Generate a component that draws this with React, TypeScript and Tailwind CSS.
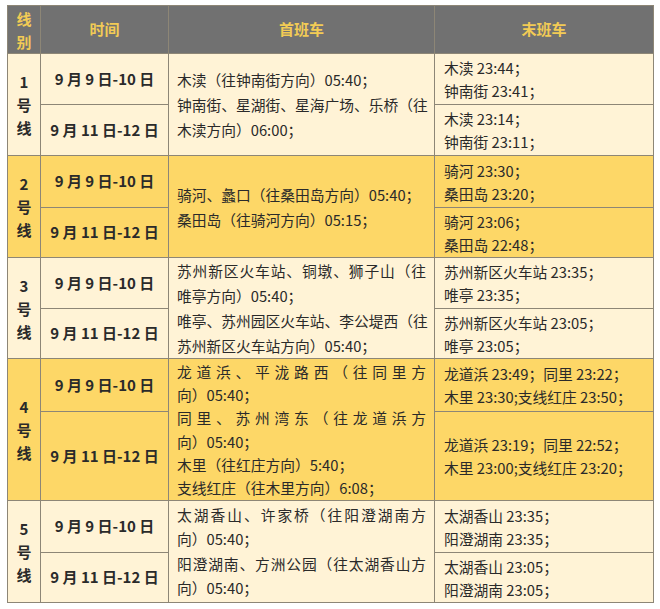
type Line = { t: string; j?: boolean };

type Route = {
  no: string;
  yellow: boolean;
  heights: [number, number];
  firstLh: number;
  first: Line[];
  last: [string[], string[]];
};

const routes: Route[] = [
  {
    no: '1',
    yellow: false,
    heights: [51, 51],
    firstLh: 25,
    first: [
      { t: '木渎（往钟南街方向）05:40；' },
      { t: '钟南街、星湖街、星海广场、乐桥（往', j: true },
      { t: '木渎方向）06:00；' },
    ],
    last: [
      ['木渎 23:44；', '钟南街 23:41；'],
      ['木渎 23:14；', '钟南街 23:11；'],
    ],
  },
  {
    no: '2',
    yellow: true,
    heights: [52, 50],
    firstLh: 25,
    first: [{ t: '骑河、蠡口（往桑田岛方向）05:40；' }, { t: '桑田岛（往骑河方向）05:15；' }],
    last: [
      ['骑河 23:30；', '桑田岛 23:20；'],
      ['骑河 23:06；', '桑田岛 22:48；'],
    ],
  },
  {
    no: '3',
    yellow: false,
    heights: [51, 50],
    firstLh: 25,
    first: [
      { t: '苏州新区火车站、铜墩、狮子山（往', j: true },
      { t: '唯亭方向）05:40；' },
      { t: '唯亭、苏州园区火车站、李公堤西（往', j: true },
      { t: '苏州新区火车站方向）05:40；' },
    ],
    last: [
      ['苏州新区火车站 23:35；', '唯亭 23:35；'],
      ['苏州新区火车站 23:05；', '唯亭 23:05；'],
    ],
  },
  {
    no: '4',
    yellow: true,
    heights: [53, 89],
    firstLh: 23.3,
    first: [
      { t: '龙道浜、平泷路西（往同里方', j: true },
      { t: '向）05:40；' },
      { t: '同里、苏州湾东（往龙道浜方', j: true },
      { t: '向）05:40；' },
      { t: '木里（往红庄方向）5:40；' },
      { t: '支线红庄（往木里方向）6:08；' },
    ],
    last: [
      ['龙道浜 23:49；同里 23:22；', '木里 23:30;支线红庄 23:50；'],
      ['龙道浜 23:19；同里 22:52；', '木里 23:00;支线红庄 23:20；'],
    ],
  },
  {
    no: '5',
    yellow: false,
    heights: [52, 50],
    firstLh: 24.5,
    first: [
      { t: '太湖香山、许家桥（往阳澄湖南方', j: true },
      { t: '向）05:40；' },
      { t: '阳澄湖南、方洲公园（往太湖香山方', j: true },
      { t: '向）05:40；' },
    ],
    last: [
      ['太湖香山 23:35；', '阳澄湖南 23:35；'],
      ['太湖香山 23:05；', '阳澄湖南 23:05；'],
    ],
  },
];

const cell = 'border border-[#8d8676] align-middle';

export default function App() {
  return (
    <div
      className="min-h-[609px] bg-white pl-[7px] pt-[5px] text-[#2a2a2a]"
      style={{ fontFamily: '"Noto Sans CJK SC", "Noto Sans", sans-serif' }}
    >
      <table className="w-[646px] table-fixed border-collapse text-[14.75px]">
        <colgroup>
          <col className="w-[33px]" />
          <col className="w-[128px]" />
          <col className="w-[266px]" />
          <col className="w-[219px]" />
        </colgroup>
        <thead>
          <tr className="h-[48px] bg-[#717171] text-[15px] font-bold text-[#f2cb55]">
            <th className={`${cell} leading-[23px]`}>
              线
              <br />
              别
            </th>
            <th className={cell}>时间</th>
            <th className={cell}>首班车</th>
            <th className={cell}>末班车</th>
          </tr>
        </thead>
        <tbody>
          {routes.map((r) => {
            const bg = r.yellow ? 'bg-[#fdd767]' : 'bg-[#fff3d6]';
            return [0, 1].map((i) => (
              <tr key={r.no + i} className={bg} style={{ height: r.heights[i] }}>
                {i === 0 && (
                  <td rowSpan={2} className={`${cell} text-center text-[15px] font-bold leading-[23px]`}>
                    {r.no}
                    <br />
                    号
                    <br />
                    线
                  </td>
                )}
                <td className={`${cell} text-center text-[15px] font-bold whitespace-nowrap`}>
                  {i === 0 ? '9 月 9 日-10 日' : '9 月 11 日-12 日'}
                </td>
                {i === 0 && (
                  <td rowSpan={2} className={`${cell} px-[8px]`}>
                    {r.first.map((l, k) => (
                      <div
                        key={k}
                        className={`whitespace-nowrap ${l.j ? '[text-align-last:justify] text-justify' : ''}`}
                        style={{ lineHeight: `${r.firstLh}px` }}
                      >
                        {l.t}
                      </div>
                    ))}
                  </td>
                )}
                <td className={`${cell} px-[9px]`}>
                  {r.last[i].map((t, k) => (
                    <div key={k} className="whitespace-nowrap leading-[23px]">
                      {t}
                    </div>
                  ))}
                </td>
              </tr>
            ));
          })}
        </tbody>
      </table>
    </div>
  );
}
